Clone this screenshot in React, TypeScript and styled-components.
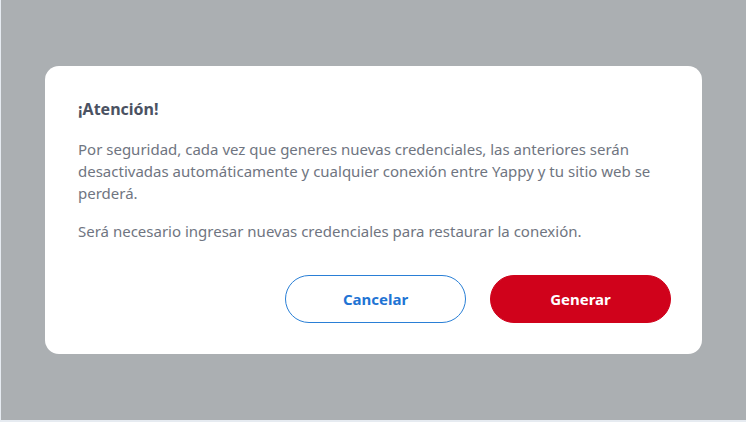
import React from "react";
import styled, { createGlobalStyle } from "styled-components";

const Global = createGlobalStyle`
  html, body { margin: 0; padding: 0; background: #e6ebf1; }
  body { font-family: "Noto Sans", "Open Sans", sans-serif; }
`;

const Backdrop = styled.div`
  width: 745px;
  height: 420px;
  margin-left: 1px;
  background: #abafb2;
  display: flex;
  flex-direction: column;
  padding: 66px 44px 0 44px;
  box-sizing: border-box;
`;

const Card = styled.div`
  background: #ffffff;
  border-radius: 14px;
  padding: 30px 31px 31px 33px;
  display: flex;
  flex-direction: column;
  box-sizing: border-box;
  height: 288px;
`;

const Title = styled.h2`
  margin: 0;
  font-size: 16px;
  font-weight: 700;
  color: #4b5262;
  line-height: 26px;
`;

const Text = styled.p<{ $top: number }>`
  margin: ${(p) => p.$top}px 0 0 0;
  font-size: 15px;
  line-height: 22px;
  color: #6f7581;
  max-width: 582px;
`;

const Actions = styled.div`
  margin-top: auto;
  display: flex;
  justify-content: flex-end;
  gap: 24px;
`;

const Button = styled.button<{ $primary?: boolean }>`
  width: 181px;
  height: 48px;
  border-radius: 24px;
  font-family: inherit;
  font-size: 15px;
  font-weight: 700;
  cursor: pointer;
  border: 1px solid ${(p) => (p.$primary ? "#d0021b" : "#2a7fd6")};
  background: ${(p) => (p.$primary ? "#d0021b" : "#ffffff")};
  color: ${(p) => (p.$primary ? "#ffffff" : "#1f74d4")};
`;

export default function App() {
  return (
    <>
      <Global />
      <Backdrop>
        <Card>
          <Title>¡Atención!</Title>
          <Text $top={16}>
            Por seguridad, cada vez que generes nuevas credenciales, las anteriores serán
            desactivadas automáticamente y cualquier conexión entre Yappy y tu sitio web se
            perderá.
          </Text>
          <Text $top={16}>
            Será necesario ingresar nuevas credenciales para restaurar la conexión.
          </Text>
          <Actions>
            <Button>Cancelar</Button>
            <Button $primary>Generar</Button>
          </Actions>
        </Card>
      </Backdrop>
    </>
  );
}
